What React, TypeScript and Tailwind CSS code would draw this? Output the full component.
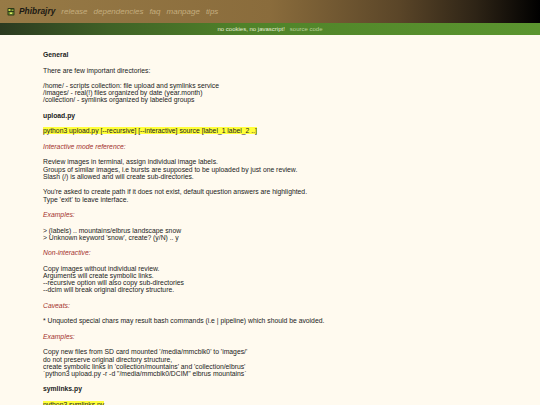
import React from 'react';

const font = { fontFamily: '"Liberation Sans", Arial, sans-serif' };

function Logo() {
  return (
    <svg width="8" height="9" viewBox="0 0 8 9" className="shrink-0">
      <rect x="0.5" y="1" width="7" height="7.5" rx="1" fill="#2c3a18" />
      <rect x="1.5" y="2" width="2" height="2" fill="#c6d84a" />
      <rect x="4.5" y="2.5" width="2" height="1.5" fill="#8fae3a" />
      <rect x="1.5" y="5" width="5" height="2.5" fill="#6f8f2c" />
      <rect x="3" y="5.5" width="2" height="1.5" fill="#dfe86a" />
    </svg>
  );
}

const Sub = ({ children }: { children: React.ReactNode }) => (
  <p className="italic text-[#a3302b] mb-[8.3px]">{children}</p>
);

const Head = ({ children }: { children: React.ReactNode }) => (
  <p className="font-bold mb-[8.3px]">{children}</p>
);

const Para = ({ lines }: { lines: string[] }) => (
  <p className="mb-[8.3px]">
    {lines.map((l, i) => (
      <span key={i} className="block">{l}</span>
    ))}
  </p>
);

const Cmd = ({ children }: { children: React.ReactNode }) => (
  <p className="mb-[8.3px]">
    <span className="bg-[#ffff3a]">{children}</span>
  </p>
);

export default function App() {
  return (
    <div className="w-[540px] h-[405px] overflow-hidden bg-[#fffaef] text-[#222]" style={font}>
      <header className="h-[23px] flex items-center pl-[7px] bg-[linear-gradient(to_right,#977a46_0%,#8a6c3c_50%,#5a4528_74%,#2e2416_88%,#000_100%)]">
        <Logo />
        <span className="ml-[4px] mr-[6px] text-[8.4px] font-bold italic text-[#1c1a14]">Phibrajry</span>
        <nav className="flex gap-[6px] text-[8px] italic text-[#c4ad7e]">
          <span>release</span>
          <span>dependencies</span>
          <span>faq</span>
          <span>manpage</span>
          <span>tips</span>
        </nav>
      </header>
      <div className="h-[12px] flex items-center justify-center gap-[5px] text-[6px] bg-[linear-gradient(to_right,#2b3a20_0%,#3f6126_20%,#4f8229_45%,#5b952f_100%)]">
        <span className="text-[#e4ecd6]">no cookies, no javascript!</span>
        <span className="text-[#b9d098]">source code</span>
      </div>
      <main className="pl-[43px] pt-[16px] text-[6.8px] leading-[7.2px]">
        <Head>General</Head>
        <Para lines={['There are few important directories:']} />
        <Para
          lines={[
            '/home/ - scripts collection: file upload and symlinks service',
            '/images/ - real(!) files organized by date (year.month)',
            '/collection/ - symlinks organized by labeled groups',
          ]}
        />
        <Head>upload.py</Head>
        <Cmd>python3 upload.py [--recursive] [--interactive] source [label_1 label_2 ..]</Cmd>
        <Sub>Interactive mode reference:</Sub>
        <Para
          lines={[
            'Review images in terminal, assign individual image labels.',
            'Groups of similar images, i.e bursts are supposed to be uploaded by just one review.',
            'Slash (/) is allowed and will create sub-directories.',
          ]}
        />
        <Para
          lines={[
            "You're asked to create path if it does not exist, default question answers are highlighted.",
            "Type 'exit' to leave interface.",
          ]}
        />
        <Sub>Examples:</Sub>
        <Para
          lines={[
            '> (labels) .. mountains/elbrus landscape snow',
            "> Unknown keyword 'snow', create? (y/N) .. y",
          ]}
        />
        <Sub>Non-interactive:</Sub>
        <Para
          lines={[
            'Copy images without individual review.',
            'Arguments will create symbolic links.',
            '--recursive option will also copy sub-directories',
            '--dcim will break original directory structure.',
          ]}
        />
        <Sub>Caveats:</Sub>
        <Para lines={['* Unquoted special chars may result bash commands (i.e | pipeline) which should be avoided.']} />
        <Sub>Examples:</Sub>
        <Para
          lines={[
            "Copy new files from SD card mounted '/media/mmcblk0' to 'images/'",
            'do not preserve original directory structure,',
            "create symbolic links in 'collection/mountains' and 'collection/elbrus'",
            '`python3 upload.py -r -d "/media/mmcblk0/DCIM" elbrus mountains`',
          ]}
        />
        <Head>symlinks.py</Head>
        <Cmd>python3 symlinks.py</Cmd>
      </main>
    </div>
  );
}
